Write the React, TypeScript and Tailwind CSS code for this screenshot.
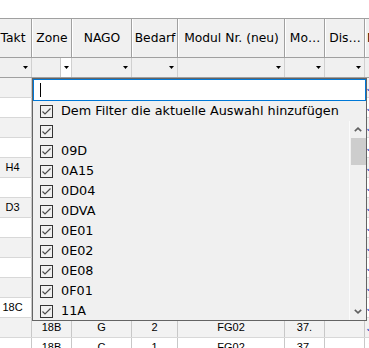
import React from "react";

type Column = { label: string; width: string };

const columns: Column[] = [
    { label: "Takt", width: "w-[38px]" },
    { label: "Zone", width: "w-[40px]" },
    { label: "NAGO", width: "w-[60px]" },
    { label: "Bedarf", width: "w-[46px]" },
    { label: "Modul Nr. (neu)", width: "w-[107px]" },
    { label: "Mo…", width: "w-[40px]" },
    { label: "Dis…", width: "w-[40px]" },
];

// rows under the popup: only the Takt column can be seen there
const rows: string[][] = [
    ["", "", "", "", "", "", ""],
    ["", "", "", "", "", "", ""],
    ["", "", "", "", "", "", ""],
    ["", "", "", "", "", "", ""],
    ["H4", "", "", "", "", "", ""],
    ["", "", "", "", "", "", ""],
    ["D3", "", "", "", "", "", ""],
    ["", "", "", "", "", "", ""],
    ["", "", "", "", "", "", ""],
    ["", "", "", "", "", "", ""],
    ["", "", "", "", "", "", ""],
    ["18C", "", "", "", "", "", ""],
    ["", "18B", "G", "2", "FG02", "37.", ""],
    ["", "18B", "C", "1", "FG02", "37.", ""],
];

const filterValues = ["", "09D", "0A15", "0D04", "0DVA", "0E01", "0E02", "0E08", "0F01", "11A"];

function DownArrow() {
    return (
        <svg width="5" height="3" viewBox="0 0 5 3">
            <path d="M0 0h5L2.5 3z" fill="#000" />
        </svg>
    );
}

function CheckBox() {
    return (
        <svg width="13" height="13" viewBox="0 0 13 13" className="shrink-0">
            <rect x="0.5" y="0.5" width="12" height="12" fill="none" stroke="#333333" />
            <polyline points="2.5,6.5 5,9 10.5,3.5" fill="none" stroke="#4a4a4a" strokeWidth="1.2" />
        </svg>
    );
}

function FilterItem({ label }: { label: string }) {
    return (
        <div className="h-[20px] shrink-0 flex items-center gap-[8px] pl-[7px] whitespace-nowrap">
            <CheckBox />
            <span>{label}</span>
        </div>
    );
}

function Chevron({ up }: { up: boolean }) {
    return (
        <svg width="8" height="5" viewBox="0 0 8 5">
            <polyline
                points={up ? "0.8,4.2 4,1.2 7.2,4.2" : "0.8,0.8 4,3.8 7.2,0.8"}
                fill="none"
                stroke="#606060"
                strokeWidth="1.6"
            />
        </svg>
    );
}

function FilterPopup() {
    return (
        <div className="absolute top-[78px] left-[32px] w-[335px] h-[243px] border border-[#646464] bg-[#f0f0f0] flex flex-col text-[12.8px] text-black font-['DejaVu_Sans',sans-serif]">
            <div className="h-[22px] shrink-0 border border-[#0078d7] bg-white flex items-center">
                <div className="ml-[6px] w-px h-[14px] bg-black" />
            </div>
            <FilterItem label="Dem Filter die aktuelle Auswahl hinzufügen" />
            <div className="flex-1 flex min-h-0">
                <div className="flex-1 flex flex-col overflow-hidden">
                    {filterValues.map((v, i) => (
                        <FilterItem key={i} label={v} />
                    ))}
                </div>
                <div className="w-[17px] border-l border-[#fbfbfb] flex flex-col">
                    <div className="h-[17px] flex items-center justify-center">
                        <Chevron up={true} />
                    </div>
                    <div className="h-[27px] ml-px bg-[#cdcdcd]" />
                    <div className="flex-1" />
                    <div className="h-[17px] flex items-center justify-center">
                        <Chevron up={false} />
                    </div>
                </div>
            </div>
        </div>
    );
}

export default function App() {
    return (
        <div className="relative w-[369px] h-[348px] overflow-hidden bg-white">
            <div className="h-[18px]" />
            <div className="ml-[-6px] w-[500px]">
                {/* column headers */}
                <div className="flex h-[40px] border-y border-[#a0a0a0] bg-[#f0f0f0] text-[12.3px] text-black font-['DejaVu_Sans',sans-serif]">
                    {columns.map(c => (
                        <div
                            key={c.label}
                            className={`${c.width} shrink-0 flex items-center justify-center border-r border-r-[#a0a0a0] border-l border-l-white whitespace-nowrap overflow-hidden`}
                        >
                            {c.label}
                        </div>
                    ))}
                    <div className="flex-1 flex items-center pl-[1px] border-l border-l-white">Nachfolger</div>
                </div>

                {/* filter row */}
                <div className="flex h-[20px] border-b border-[#a0a0a0] bg-[#f0f0f0]">
                    {columns.map((c, i) => (
                        <div key={c.label} className={`${c.width} shrink-0 flex justify-end border-r border-[#d0d0d0]`}>
                            <div className={`w-[11px] flex items-center justify-center ${i === 1 ? "bg-white border-l border-[#c8c8c8]" : ""}`}>
                                <DownArrow />
                            </div>
                        </div>
                    ))}
                    <div className="flex-1" />
                </div>

                {/* data rows */}
                {rows.map((r, ri) => (
                    <div
                        key={ri}
                        className={`flex h-[20px] border-b border-[#d8d8d8] text-[11px] text-black font-['Liberation_Sans',sans-serif] ${ri % 2 === 0 ? "bg-[#f2f2f2]" : "bg-white"}`}
                    >
                        {columns.map((c, ci) => (
                            <div key={c.label} className={`${c.width} shrink-0 flex items-center justify-center border-r border-[#c8c8c8]`}>
                                {r[ci]}
                            </div>
                        ))}
                        <div className="flex-1 flex items-center pl-[2px] text-[#1f4fc8]">Ja</div>
                    </div>
                ))}
            </div>
            <FilterPopup />
        </div>
    );
}
